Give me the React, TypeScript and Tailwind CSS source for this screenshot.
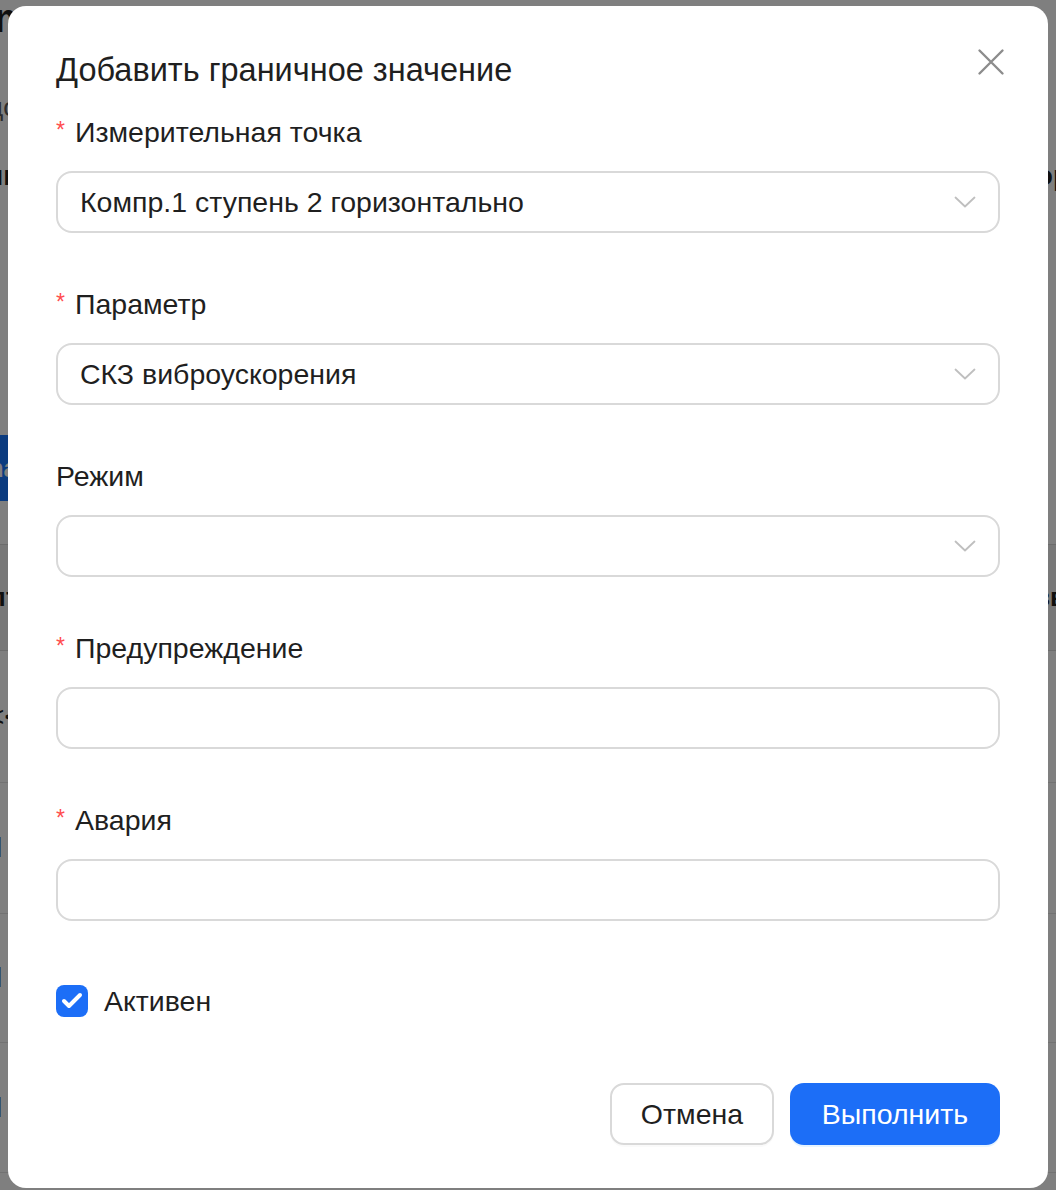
import { Check } from "lucide-react";

const fields = [
  { label: "Измерительная точка", required: true, kind: "select", value: "Компр.1 ступень 2 горизонтально" },
  { label: "Параметр", required: true, kind: "select", value: "СКЗ виброускорения" },
  { label: "Режим", required: false, kind: "select", value: "" },
  { label: "Предупреждение", required: true, kind: "input", value: "" },
  { label: "Авария", required: true, kind: "input", value: "" },
];

const Chevron = () => (
  <svg width="22" height="12" viewBox="0 0 22 12" fill="none" className="shrink-0">
    <path d="M1.5 1.5 L11 10.5 L20.5 1.5" stroke="#bfbfbf" strokeWidth="1.8" strokeLinecap="round" strokeLinejoin="round" />
  </svg>
);

const CloseIcon = () => (
  <svg width="28" height="28" viewBox="0 0 28 28" fill="none">
    <path d="M2.5 2.5 L25.5 25.5 M25.5 2.5 L2.5 25.5" stroke="#8c8c8c" strokeWidth="2.4" strokeLinecap="round" />
  </svg>
);

const App = () => {
  return (
    <div className="relative w-[1056px] h-[1190px] overflow-hidden bg-white font-['Liberation_Sans',Arial,sans-serif] text-[#1f1f1f]">
      {/* page behind the dialog */}
      <div className="flex flex-col">
        <div className="h-[40px] -ml-[6px] text-[40px] leading-[36px] font-bold">mm</div>
        <div className="mt-[48px] -ml-[12px] text-[26px] text-[#595959]">до</div>
        <div className="mt-[28px] flex justify-between -mx-[14px] text-[28px] font-bold">
          <span>ик</span>
          <span>ор</span>
        </div>
        <div className="mt-[238px] w-[60px] h-[66px] -ml-[30px] bg-[#1677ff] rounded-[8px] text-white text-[26px] font-bold flex items-center justify-end pr-[12px]">na</div>
        <div className="mt-[43px] h-[107px] bg-[#f0f0f0] border-y border-[#d9d9d9] flex items-center justify-between -mx-[10px] text-[26px] font-bold">
          <span>пт</span>
          <span>зв</span>
        </div>
        <div className="h-[132px] border-b border-[#e5e5e5] flex items-center -ml-[12px] text-[28px]">{"<<"}</div>
        <div className="h-[131px] border-b border-[#e5e5e5] flex items-center -ml-[4px] text-[28px]">l</div>
        <div className="h-[129px] border-b border-[#e5e5e5] flex items-center -ml-[4px] text-[28px]">l</div>
        <div className="h-[130px] border-b border-[#e5e5e5] flex items-center -ml-[4px] text-[28px]">l</div>
      </div>

      {/* mask */}
      <div className="absolute inset-0 bg-black/50" />

      {/* dialog */}
      <div className="absolute left-[8px] top-[6px] w-[1040px] h-[1182px] bg-white rounded-[18px] px-[48px] pt-[44px] pb-[43px] flex flex-col">
        <button className="absolute right-[43px] top-[42px] w-[28px] h-[28px]">
          <CloseIcon />
        </button>

        <h2 className="h-[40px] flex items-center text-[32.5px] leading-[40px] font-normal text-[#1f1f1f]">
          Добавить граничное значение
        </h2>

        <div className="mt-[20px] flex flex-col">
          {fields.map((f, i) => (
            <div key={i} className="flex flex-col mb-[49px]">
              <div className="h-[44px] mb-[17px] flex items-center text-[28.5px]">
                {f.required && <span className="text-[#ff4d4f] text-[23px] mr-[10px] -mt-[4px]">*</span>}
                <span>{f.label}</span>
              </div>
              <div className="h-[62px] border-2 border-[#d9d9d9] rounded-[16px] flex items-center justify-between pl-[22px] pr-[22px] text-[28.5px]">
                <span>{f.value}</span>
                {f.kind === "select" && <Chevron />}
              </div>
            </div>
          ))}
        </div>

        <label className="h-[62px] flex items-center gap-[16px] text-[28.5px]">
          <span className="w-[32px] h-[32px] rounded-[8px] bg-[#1c6ef7] flex items-center justify-center">
            <Check size={24} strokeWidth={4} color="#fff" />
          </span>
          <span>Активен</span>
        </label>

        <div className="mt-auto flex justify-end gap-[16px]">
          <button className="w-[164px] h-[62px] border-2 border-[#d9d9d9] rounded-[14px] bg-white text-[28.5px] text-[#1f1f1f] shadow-[0_2px_0_rgba(0,0,0,0.02)]">
            Отмена
          </button>
          <button className="w-[210px] h-[62px] rounded-[14px] bg-[#1c6ef7] text-[28.5px] text-white shadow-[0_2px_0_rgba(5,145,255,0.1)]">
            Выполнить
          </button>
        </div>
      </div>
    </div>
  );
};

export default App;
